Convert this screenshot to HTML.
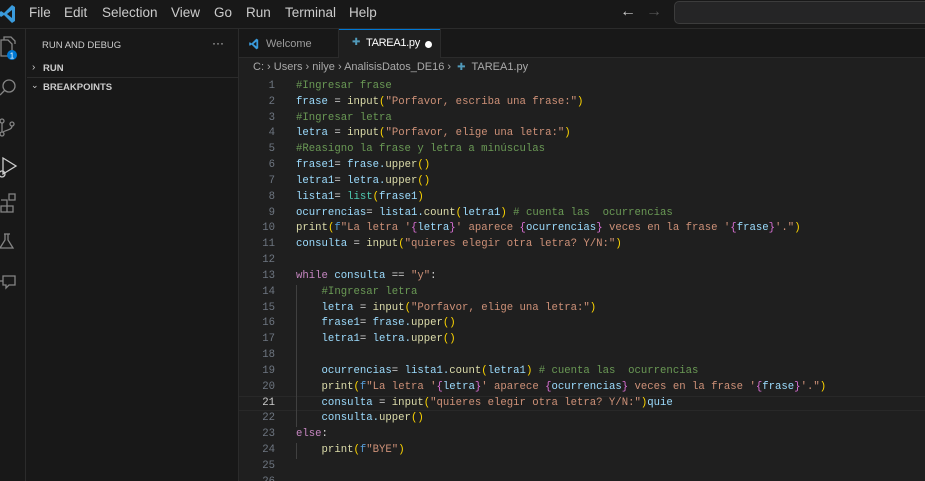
<!DOCTYPE html>
<html><head><meta charset="utf-8"><style>
*{margin:0;padding:0;box-sizing:border-box}
html,body{width:925px;height:481px;overflow:hidden}
body{background:#1f1f1f;font-family:"Liberation Sans",sans-serif;color:#ccc;position:relative}
.abs{position:absolute}
#title{left:0;top:0;width:925px;height:29px;background:#181818;border-bottom:1px solid #2b2b2b}
.menu{top:5px;font-size:13.5px;color:#cccccc}
#act{left:0;top:29px;width:26px;height:452px;background:#181818;border-right:1px solid #2b2b2b}
#side{left:26px;top:29px;width:213px;height:452px;background:#181818;border-right:1px solid #2b2b2b}
#tabs{left:239px;top:29px;width:686px;height:29px;background:#181818;border-bottom:1px solid #2b2b2b}
.code{left:239px;top:79px;width:686px;font-family:"Liberation Mono",monospace;font-size:10.65px;line-height:15.83px;color:#9cdcfe}
.ln{display:block;position:relative;height:15.83px}
.n{position:absolute;left:0;width:36px;text-align:right;color:#6e7681}
.t{position:absolute;left:57px;white-space:pre}
.c{color:#6a9955}.f{color:#dcdcaa}.s{color:#ce9178}.k{color:#c586c0}.y{color:#ffd700}.p{color:#da70d6}.b{color:#179fff}.w{color:#d4d4d4}.tl{color:#4ec9b0}.fs{color:#569cd6}
.g{position:absolute;left:57px;top:0;width:1px;height:15.83px;background:#404040}
</style></head><body>
<div id="title" class="abs"></div>
<svg class="abs" style="left:0;top:4px" width="16" height="20" viewBox="0 0 16 20"><path d="M12 1 L4 9 L1 7 L0 8 L0 12 L1 13 L4 11 L12 19 L15 17 L15 3Z M12 6 L12 14 L7 10Z" fill="#3a9bdc" fill-rule="evenodd"/></svg>
<div class="abs menu" style="left:29px">File</div>
<div class="abs menu" style="left:64px">Edit</div>
<div class="abs menu" style="left:102px">Selection</div>
<div class="abs menu" style="left:171px">View</div>
<div class="abs menu" style="left:214px">Go</div>
<div class="abs menu" style="left:246px">Run</div>
<div class="abs menu" style="left:285px">Terminal</div>
<div class="abs menu" style="left:349px">Help</div>
<div class="abs" style="left:620px;top:3px;color:#ccc;font-size:16px">←</div>
<div class="abs" style="left:646px;top:3px;color:#555;font-size:16px">→</div>
<div class="abs" style="left:674px;top:1px;width:260px;height:23px;border:1px solid #3c3c3c;border-radius:5px;background:#252526"></div>

<div id="act" class="abs"></div>
<svg class="abs" style="left:0;top:36px" width="26" height="270" viewBox="0 0 26 270" fill="none" stroke="#858585" stroke-width="1.3">
<path d="M1 4h7l4 4v12h-11z M4 4v-3h7l4 4v3"/>
<circle cx="12" cy="19" r="5" fill="#0078d4" stroke="none"/>
<text x="12" y="22.5" font-size="8" fill="#fff" stroke="none" text-anchor="middle" font-family="Liberation Sans">1</text>
<circle cx="9" cy="50" r="6"/><path d="M4.5 54.5L0 59"/>
<circle cx="2" cy="85" r="2"/><circle cx="2" cy="98" r="2"/><circle cx="12" cy="88" r="2"/><path d="M2 87v9 M12 90c0 4-6 4-9 6"/>
<path d="M3 122l13 8-13 8z" stroke="#ccc"/><circle cx="2" cy="138" r="3" stroke="#ccc"/>
<path d="M1 170h6v6h-6z M1 164h6v6 M7 170h6v6h-6 M9 158h6v6h-6z"/>
<path d="M5 198v6l-5 8h13l-5-8v-6 M4 198h6"/>
<path d="M3 240h12v9h-6l-3 3v-3h-3z M0 245h3"/>
</svg>

<div id="side" class="abs"></div>
<div class="abs" style="left:42px;top:40px;font-size:9.5px;color:#ccc">RUN AND DEBUG</div>
<div class="abs" style="left:212px;top:36px;font-size:12px;color:#ccc">···</div>
<div class="abs" style="left:32px;top:62px;font-size:10px;color:#ccc">›</div>
<div class="abs" style="left:43px;top:63px;font-size:9.5px;font-weight:bold;color:#ccc">RUN</div>
<div class="abs" style="left:27px;top:77px;width:212px;height:1px;background:#2b2b2b"></div>
<div class="abs" style="left:31px;top:80px;font-size:9px;color:#ccc">⌄</div>
<div class="abs" style="left:43px;top:82px;font-size:9.5px;font-weight:bold;color:#ccc">BREAKPOINTS</div>

<div id="tabs" class="abs"></div>
<div class="abs" style="left:339px;top:29px;width:102px;height:30px;background:#1f1f1f;border-top:1px solid #0078d4"></div>
<div class="abs" style="left:440px;top:29px;width:1px;height:29px;background:#2b2b2b"></div>
<div class="abs" style="left:338px;top:29px;width:1px;height:29px;background:#2b2b2b"></div>
<svg class="abs" style="left:248px;top:38px" width="12" height="12" viewBox="0 0 16 20"><path d="M12 1 L4 9 L1 7 L0 8 L0 12 L1 13 L4 11 L12 19 L15 17 L15 3Z M12 6 L12 14 L7 10Z" fill="#3a9bdc" fill-rule="evenodd"/></svg>
<div class="abs" style="left:266px;top:38px;font-size:11px;color:#9d9d9d">Welcome</div>
<div class="abs" style="left:352px;top:37px;font-size:10px;color:#519aba">✚</div>
<div class="abs" style="left:366px;top:37px;font-size:11px;color:#fff;letter-spacing:-0.3px">TAREA1.py</div>
<div class="abs" style="left:425px;top:41px;width:7px;height:7px;border-radius:50%;background:#fff"></div>
<div class="abs" style="left:253px;top:61px;font-size:11px;color:#a9a9a9;white-space:pre">C: › Users › nilye › AnalisisDatos_DE16 ›  <span style="color:#519aba;font-size:10px">✚</span>  TAREA1.py</div>

<div class="abs code">
<div class="ln"><span class="n">1</span><span class="t c">#Ingresar frase</span></div>
<div class="ln"><span class="n">2</span><span class="t">frase <span class="w">=</span> <span class="f">input</span><span class="y">(</span><span class="s">"Porfavor, escriba una frase:"</span><span class="y">)</span></span></div>
<div class="ln"><span class="n">3</span><span class="t c">#Ingresar letra</span></div>
<div class="ln"><span class="n">4</span><span class="t">letra <span class="w">=</span> <span class="f">input</span><span class="y">(</span><span class="s">"Porfavor, elige una letra:"</span><span class="y">)</span></span></div>
<div class="ln"><span class="n">5</span><span class="t c">#Reasigno la frase y letra a minúsculas</span></div>
<div class="ln"><span class="n">6</span><span class="t">frase1<span class="w">=</span> frase.<span class="f">upper</span><span class="y">()</span></span></div>
<div class="ln"><span class="n">7</span><span class="t">letra1<span class="w">=</span> letra.<span class="f">upper</span><span class="y">()</span></span></div>
<div class="ln"><span class="n">8</span><span class="t">lista1<span class="w">=</span> <span class="tl">list</span><span class="y">(</span>frase1<span class="y">)</span></span></div>
<div class="ln"><span class="n">9</span><span class="t">ocurrencias<span class="w">=</span> lista1.<span class="f">count</span><span class="y">(</span>letra1<span class="y">)</span> <span class="c"># cuenta las  ocurrencias</span></span></div>
<div class="ln"><span class="n">10</span><span class="t"><span class="f">print</span><span class="y">(</span><span class="fs">f</span><span class="s">"La letra '</span><span class="p">{</span>letra<span class="p">}</span><span class="s">' aparece </span><span class="p">{</span>ocurrencias<span class="p">}</span><span class="s"> veces en la frase '</span><span class="p">{</span>frase<span class="p">}</span><span class="s">'."</span><span class="y">)</span></span></div>
<div class="ln"><span class="n">11</span><span class="t">consulta <span class="w">=</span> <span class="f">input</span><span class="y">(</span><span class="s">"quieres elegir otra letra? Y/N:"</span><span class="y">)</span></span></div>
<div class="ln"><span class="n">12</span></div>
<div class="ln"><span class="n">13</span><span class="t"><span class="k">while</span> consulta <span class="w">==</span> <span class="s">"y"</span><span class="w">:</span></span></div>
<div class="ln"><span class="n">14</span><span class="g"></span><span class="t c">    #Ingresar letra</span></div>
<div class="ln"><span class="n">15</span><span class="g"></span><span class="t">    letra <span class="w">=</span> <span class="f">input</span><span class="y">(</span><span class="s">"Porfavor, elige una letra:"</span><span class="y">)</span></span></div>
<div class="ln"><span class="n">16</span><span class="g"></span><span class="t">    frase1<span class="w">=</span> frase.<span class="f">upper</span><span class="y">()</span></span></div>
<div class="ln"><span class="n">17</span><span class="g"></span><span class="t">    letra1<span class="w">=</span> letra.<span class="f">upper</span><span class="y">()</span></span></div>
<div class="ln"><span class="n">18</span><span class="g"></span></div>
<div class="ln"><span class="n">19</span><span class="g"></span><span class="t">    ocurrencias<span class="w">=</span> lista1.<span class="f">count</span><span class="y">(</span>letra1<span class="y">)</span> <span class="c"># cuenta las  ocurrencias</span></span></div>
<div class="ln"><span class="n">20</span><span class="g"></span><span class="t">    <span class="f">print</span><span class="y">(</span><span class="fs">f</span><span class="s">"La letra '</span><span class="p">{</span>letra<span class="p">}</span><span class="s">' aparece </span><span class="p">{</span>ocurrencias<span class="p">}</span><span class="s"> veces en la frase '</span><span class="p">{</span>frase<span class="p">}</span><span class="s">'."</span><span class="y">)</span></span></div>
<div class="ln" style="box-shadow:inset 0 1px #282828,inset 0 -1px #282828"><span class="n" style="color:#ccc">21</span><span class="g"></span><span class="t">    consulta <span class="w">=</span> <span class="f">input</span><span class="y">(</span><span class="s">"quieres elegir otra letra? Y/N:"</span><span class="y">)</span>quie</span></div>
<div class="ln"><span class="n">22</span><span class="g"></span><span class="t">    consulta.<span class="f">upper</span><span class="y">()</span></span></div>
<div class="ln"><span class="n">23</span><span class="t"><span class="k">else</span><span class="w">:</span></span></div>
<div class="ln"><span class="n">24</span><span class="g"></span><span class="t">    <span class="f">print</span><span class="y">(</span><span class="fs">f</span><span class="s">"BYE"</span><span class="y">)</span></span></div>
<div class="ln"><span class="n">25</span></div>
<div class="ln"><span class="n">26</span></div>
</div>
</body></html>
